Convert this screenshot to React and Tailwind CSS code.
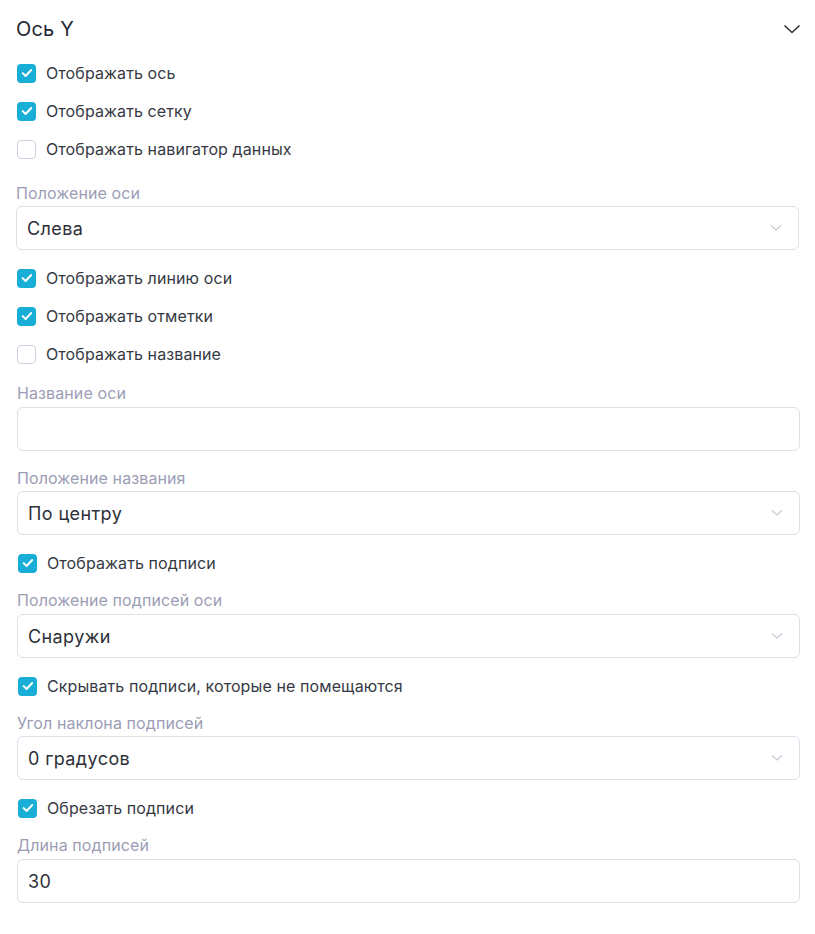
import { useState } from "react";

const font = { fontFamily: "Inter, 'Noto Sans', sans-serif" };

function Check({ checked, onChange, label }) {
  return (
    <label className="flex h-[38px] cursor-pointer items-center gap-[10px] pl-px">
      <span
        className={
          checked
            ? "flex h-[19px] w-[19px] items-center justify-center rounded-[4px] bg-[#19aed6]"
            : "flex h-[19px] w-[19px] items-center justify-center rounded-[4px] border border-[#cfd1e0] bg-white"
        }
        onClick={onChange}
      >
        {checked && (
          <svg width="14" height="14" viewBox="0 0 12 12" fill="none">
            <path d="M2.3 6.1l2.5 2.5 4.8-5.2" stroke="white" strokeWidth="1.7" strokeLinecap="round" strokeLinejoin="round" />
          </svg>
        )}
      </span>
      <span className="text-[16px] tracking-[0.1px] text-[#363944]">{label}</span>
    </label>
  );
}

function FieldLabel({ children, className }) {
  return <div className={"h-[20px] text-[16px] leading-[20px] tracking-[0.1px] text-[#9b9db5] " + className}>{children}</div>;
}

function Select({ value, className }) {
  return (
    <div className={"flex h-[44px] items-center justify-between rounded-[6px] border border-[#dddeea] bg-white pl-[10px] pr-[16px] " + className}>
      <span className="text-[18px] tracking-[0.4px] text-[#2e3039]">{value}</span>
      <svg width="12" height="8" viewBox="0 0 12 8" fill="none">
        <path d="M1 1.5l5 4.5 5-4.5" stroke="#c7c9d8" strokeWidth="1.2" />
      </svg>
    </div>
  );
}

function TextInput({ value, className }) {
  return (
    <div className={"flex h-[44px] items-center rounded-[6px] border border-[#dddeea] bg-white pl-[10px] " + className}>
      <span className="text-[18px] tracking-[0.4px] text-[#2e3039]">{value}</span>
    </div>
  );
}

export default function App() {
  const [checks, setChecks] = useState({
    axis: true,
    grid: true,
    nav: false,
    line: true,
    ticks: true,
    title: false,
    labels: true,
    hide: true,
    cut: true,
  });

  const toggle = (key) => setChecks((prev) => ({ ...prev, [key]: !prev[key] }));

  return (
    <div className="min-h-[934px] w-[815px] bg-white px-[16px]" style={font}>
      {/* header */}
      <div className="flex h-[54px] items-center justify-between pt-[4px]">
        <span className="text-[20px] font-normal tracking-[0.2px] text-[#25272f]">Ось Y</span>
        <svg width="18" height="10" viewBox="0 0 18 10" fill="none" className="mr-[-2px]">
          <path d="M1.5 1.5l7.5 7 7.5-7" stroke="#2f3138" strokeWidth="1.6" />
        </svg>
      </div>

      <Check checked={checks.axis} onChange={() => toggle("axis")} label="Отображать ось" />
      <Check checked={checks.grid} onChange={() => toggle("grid")} label="Отображать сетку" />
      <Check checked={checks.nav} onChange={() => toggle("nav")} label="Отображать навигатор данных" />

      <FieldLabel className="mt-[15px]">Положение оси</FieldLabel>
      <Select value="Слева" className="mt-[3px]" />

      <div className="mt-[9px]">
        <Check checked={checks.line} onChange={() => toggle("line")} label="Отображать линию оси" />
        <Check checked={checks.ticks} onChange={() => toggle("ticks")} label="Отображать отметки" />
        <Check checked={checks.title} onChange={() => toggle("title")} label="Отображать название" />
      </div>

      <div className="ml-px -mr-px">
        <FieldLabel className="mt-[10px]">Название оси</FieldLabel>
        <TextInput value="" className="mt-[4px]" />

        <FieldLabel className="mt-[17px]">Положение названия</FieldLabel>
        <Select value="По центру" className="mt-[3px]" />

        <div className="mt-[9px]">
          <Check checked={checks.labels} onChange={() => toggle("labels")} label="Отображать подписи" />
        </div>
        <FieldLabel className="mt-[8px]">Положение подписей оси</FieldLabel>
        <Select value="Снаружи" className="mt-[4px]" />

        <div className="mt-[9px]">
          <Check checked={checks.hide} onChange={() => toggle("hide")} label="Скрывать подписи, которые не помещаются" />
        </div>
        <FieldLabel className="mt-[8px]">Угол наклона подписей</FieldLabel>
        <Select value="0 градусов" className="mt-[3px]" />

        <div className="mt-[9px]">
          <Check checked={checks.cut} onChange={() => toggle("cut")} label="Обрезать подписи" />
        </div>
        <FieldLabel className="mt-[8px]">Длина подписей</FieldLabel>
        <TextInput value="30" className="mt-[4px]" />
      </div>
    </div>
  );
}
